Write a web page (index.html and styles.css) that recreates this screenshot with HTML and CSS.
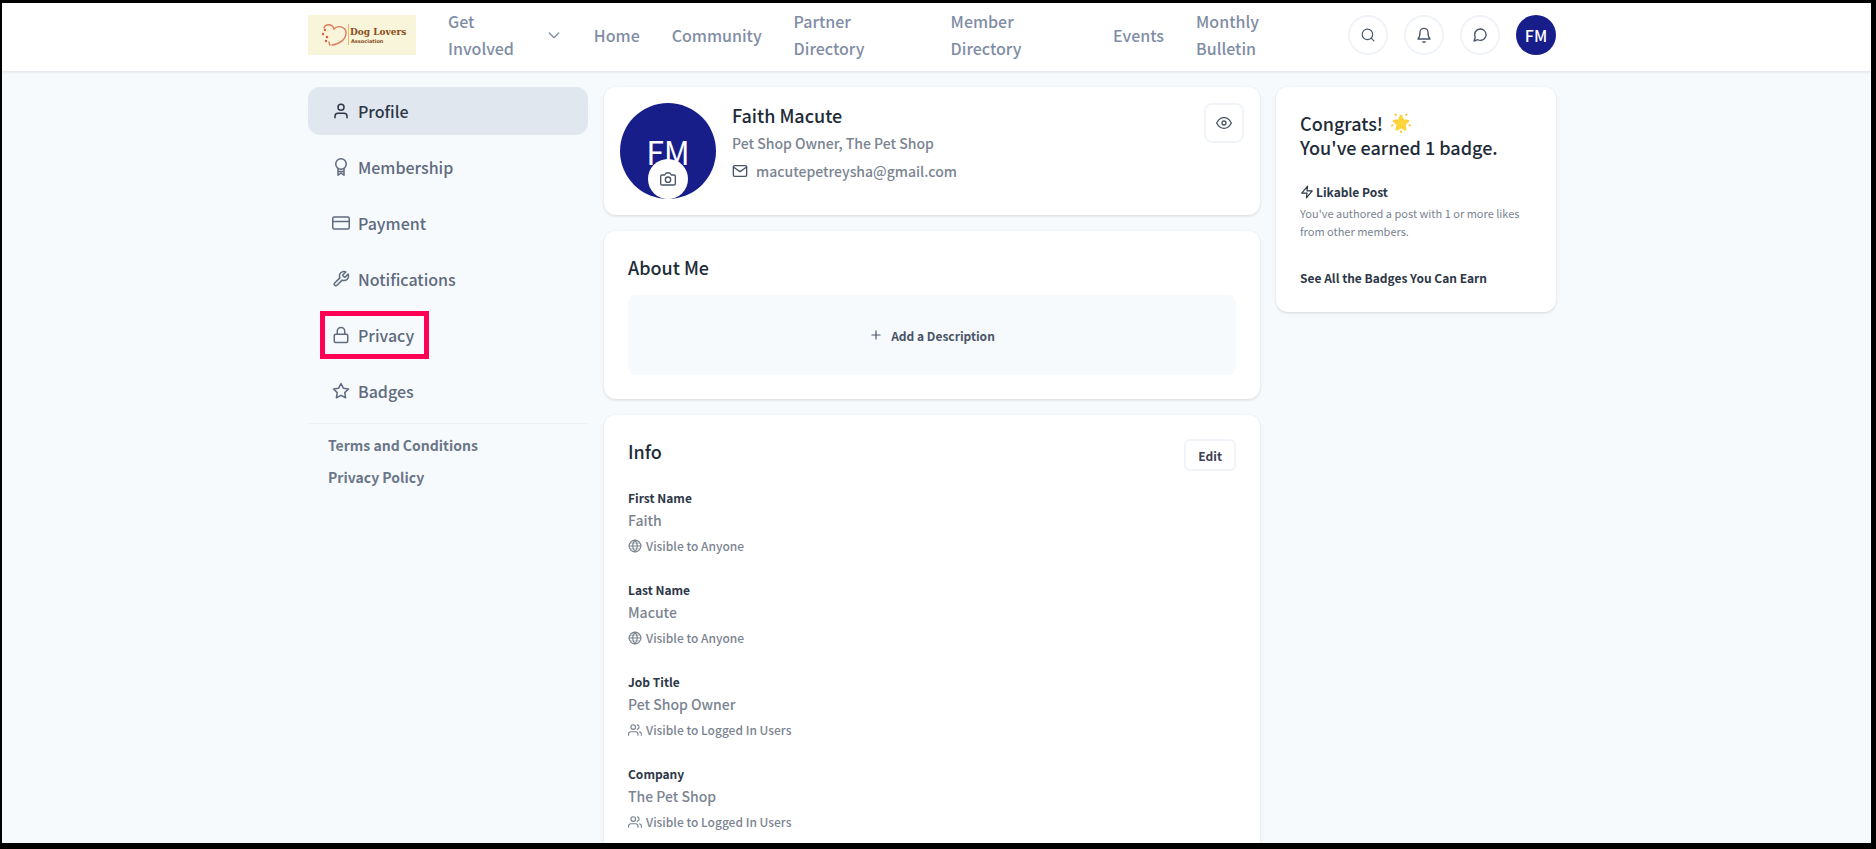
FILE: index.html
```html
<!DOCTYPE html>
<html lang="en">
    <head>
        <meta charset="UTF-8" />
        <meta name="viewport" content="width=device-width, initial-scale=1.0" />
        <title>Profile</title>
        <link rel="stylesheet" href="styles.css">
    </head>
    <body>
        <!-- shared icon shapes -->
        <svg class="sprite" aria-hidden="true">
            <symbol id="chevron" viewBox="0 0 24 24"><path d="M5 9l7 7 7-7" /></symbol>
            <symbol id="search" viewBox="0 0 24 24"><circle cx="11" cy="11" r="9" /><path d="M22 22l-4.5-4.5" /></symbol>
            <symbol id="bell" viewBox="0 0 24 24"><path d="M18 8A6 6 0 0 0 6 8c0 7-3 10-3 10h18s-3-3-3-10M13.7 22a2 2 0 0 1-3.4 0" /></symbol>
            <symbol id="chat" viewBox="0 0 24 24"><path d="M21 11.5a8.4 8.4 0 0 1-.9 3.8 8.5 8.5 0 0 1-7.6 4.7 8.4 8.4 0 0 1-3.8-.9L3 21l1.9-5.7a8.4 8.4 0 0 1-.9-3.8 8.5 8.5 0 0 1 4.7-7.6 8.4 8.4 0 0 1 3.8-.9h.5a8.5 8.5 0 0 1 8 8z" /></symbol>
            <symbol id="user" viewBox="0 0 24 24"><path d="M20 21v-2a4 4 0 0 0-4-4H8a4 4 0 0 0-4 4v2" /><circle cx="12" cy="7" r="4" /></symbol>
            <symbol id="award" viewBox="0 0 24 24"><circle cx="12" cy="8" r="7" /><path d="M8 14v9l4-3 4 3v-9M8 18h8" /></symbol>
            <symbol id="card" viewBox="0 0 24 24"><rect x="1" y="4" width="22" height="16" rx="2" /><path d="M1 10h22" /></symbol>
            <symbol id="tool" viewBox="0 0 24 24"><path d="M14.7 6.3a1 1 0 0 0 0 1.4l1.6 1.6a1 1 0 0 0 1.4 0l3.77-3.77a6 6 0 0 1-7.94 7.94l-6.91 6.91a2.12 2.12 0 0 1-3-3l6.91-6.91a6 6 0 0 1 7.94-7.94l-3.76 3.76z" /></symbol>
            <symbol id="lock" viewBox="0 0 24 24"><rect x="3" y="11" width="18" height="11" rx="2" /><path d="M7 11V7a5 5 0 0 1 10 0v4" /></symbol>
            <symbol id="star" viewBox="0 0 24 24"><path d="M12 2l3.09 6.26L22 9.27l-5 4.87 1.18 6.88L12 17.77l-6.18 3.25L7 14.14 2 9.27l6.91-1.01L12 2z" /></symbol>
            <symbol id="camera" viewBox="0 0 24 24"><path d="M23 19a2 2 0 0 1-2 2H3a2 2 0 0 1-2-2V8a2 2 0 0 1 2-2h4l2-3h6l2 3h4a2 2 0 0 1 2 2z" /><circle cx="12" cy="13" r="4" /></symbol>
            <symbol id="mail" viewBox="0 0 24 24"><rect x="2" y="4" width="20" height="16" rx="2" /><path d="M22 6l-10 7L2 6" /></symbol>
            <symbol id="eye" viewBox="0 0 24 24"><path d="M1 12s4-8 11-8 11 8 11 8-4 8-11 8-11-8-11-8z" /><circle cx="12" cy="12" r="3" /></symbol>
            <symbol id="plus" viewBox="0 0 24 24"><path d="M12 5v14M5 12h14" /></symbol>
            <symbol id="zap" viewBox="0 0 24 24"><path d="M13 2L3 14h9l-1 8 10-12h-9l1-8z" /></symbol>
            <symbol id="globe" viewBox="0 0 24 24"><circle cx="12" cy="12" r="10" /><path d="M2 12h20M12 2a15.3 15.3 0 0 1 4 10 15.3 15.3 0 0 1-4 10 15.3 15.3 0 0 1-4-10 15.3 15.3 0 0 1 4-10z" /><path d="M4 7h16M4 17h16" stroke-width="1" /></symbol>
            <symbol id="users" viewBox="0 0 24 24"><path d="M17 21v-2a4 4 0 0 0-4-4H5a4 4 0 0 0-4 4v2M23 21v-2a4 4 0 0 0-3-3.87M16 3.13a4 4 0 0 1 0 7.75" /><circle cx="9" cy="7" r="4" /></symbol>
        </svg>

        <header class="header">
            <div class="header-inner">
                <a href="#" class="logo" aria-label="Dog Lovers Association">
                    <svg viewBox="0 0 108 40" width="108" height="40">
                        <g fill="none" stroke="#e07a5f" stroke-width="1.4" stroke-linecap="round">
                            <path d="M16 13c1-4 8-5 10 1 3-4 12-3 12 4 0 6-6 11-14 12" />
                            <path d="M22 30c-1-1-1-2-1-3" />
                        </g>
                        <g fill="#d9603f">
                            <circle cx="17" cy="15" r="1.2" />
                            <circle cx="15" cy="19" r="1.2" />
                            <circle cx="19" cy="22" r="1.3" />
                            <circle cx="18" cy="26" r="1.2" />
                        </g>
                        <path d="M40.500 9v21" stroke="#f2b56b" />
                        <text x="42" y="20" class="logo-name">Dog Lovers</text>
                        <text x="43" y="28" class="logo-sub">Association</text>
                    </svg>
                </a>
                <nav class="nav">
                    <a href="#" class="nav-drop">
                        <span>Get Involved</span>
                        <svg class="icon icon-md"><use href="#chevron" /></svg>
                    </a>
                    <a href="#">Home</a>
                    <a href="#">Community</a>
                    <a href="#">Partner Directory</a>
                    <a href="#">Member Directory</a>
                    <a href="#">Events</a>
                    <a href="#">Monthly Bulletin</a>
                </nav>
                <div class="actions">
                    <button class="round-btn" aria-label="Search"><svg class="icon icon-sm"><use href="#search" /></svg></button>
                    <button class="round-btn" aria-label="Alerts"><svg class="icon icon-md"><use href="#bell" /></svg></button>
                    <button class="round-btn" aria-label="Messages"><svg class="icon icon-md"><use href="#chat" /></svg></button>
                    <button class="round-btn account">FM</button>
                </div>
            </div>
        </header>

        <main class="layout">
            <aside class="sidebar">
                <nav class="menu">
                    <a href="#" class="active"><svg class="icon icon-lg"><use href="#user" /></svg>Profile</a>
                    <a href="#"><svg class="icon icon-lg"><use href="#award" /></svg>Membership</a>
                    <a href="#"><svg class="icon icon-lg"><use href="#card" /></svg>Payment</a>
                    <a href="#"><svg class="icon icon-lg"><use href="#tool" /></svg>Notifications</a>
                    <a href="#" class="marked"><svg class="icon icon-lg"><use href="#lock" /></svg>Privacy</a>
                    <a href="#"><svg class="icon icon-lg"><use href="#star" /></svg>Badges</a>
                </nav>
                <div class="legal">
                    <a href="#">Terms and Conditions</a>
                    <a href="#">Privacy Policy</a>
                </div>
            </aside>

            <div class="column">
                <section class="card person">
                    <div class="avatar">
                        FM
                        <button class="photo-btn" aria-label="Change photo"><svg class="icon icon-md"><use href="#camera" /></svg></button>
                    </div>
                    <div class="person-text">
                        <h1>Faith Macute</h1>
                        <p>Pet Shop Owner, The Pet Shop</p>
                        <p class="email"><svg class="icon icon-md"><use href="#mail" /></svg>macutepetreysha@gmail.com</p>
                    </div>
                    <button class="square-btn" aria-label="View profile"><svg class="icon icon-md"><use href="#eye" /></svg></button>
                </section>

                <section class="card">
                    <h2>About Me</h2>
                    <button class="add-btn"><svg class="icon icon-sm"><use href="#plus" /></svg>Add a Description</button>
                </section>

                <section class="card">
                    <div class="card-head">
                        <h2>Info</h2>
                        <button class="edit-btn">Edit</button>
                    </div>
                    <dl class="info">
                        <div>
                            <dt>First Name</dt>
                            <dd>Faith</dd>
                            <dd class="visible"><svg class="icon icon-sm"><use href="#globe" /></svg>Visible to Anyone</dd>
                        </div>
                        <div>
                            <dt>Last Name</dt>
                            <dd>Macute</dd>
                            <dd class="visible"><svg class="icon icon-sm"><use href="#globe" /></svg>Visible to Anyone</dd>
                        </div>
                        <div>
                            <dt>Job Title</dt>
                            <dd>Pet Shop Owner</dd>
                            <dd class="visible"><svg class="icon icon-sm"><use href="#users" /></svg>Visible to Logged In Users</dd>
                        </div>
                        <div>
                            <dt>Company</dt>
                            <dd>The Pet Shop</dd>
                            <dd class="visible"><svg class="icon icon-sm"><use href="#users" /></svg>Visible to Logged In Users</dd>
                        </div>
                    </dl>
                </section>
            </div>

            <aside class="card badges">
                <h2>
                    Congrats!
                    <svg class="glow-star" viewBox="0 0 20 20" aria-hidden="true">
                        <path d="M10 3l2 4.500 5 .6-3.700 3.300 1 5-4.300-2.500-4.300 2.500 1-5L3 8.100l5-.6z" fill="#ffd43b" stroke="#ffd43b" stroke-width="2.500" stroke-linejoin="round" />
                        <path d="M4.500 1.500l.4.600M15.500 1.500l-.4.600M1 12.500l.6-.2M19 12.500l-.6-.2M10 18.500v.5" stroke="#fcc21b" stroke-width="1.800" stroke-linecap="round" />
                    </svg>
                    <br>You've earned 1 badge.
                </h2>
                <h3><svg class="icon icon-sm"><use href="#zap" /></svg>Likable Post</h3>
                <p>You've authored a post with 1 or more likes from other members.</p>
                <a href="#">See All the Badges You Can Earn</a>
            </aside>
        </main>
    </body>
</html>
```

FILE: styles.css
```css
* {
    box-sizing: border-box;
}

body {
    margin: 0;
    height: 100vh;
    overflow: hidden;
    border: solid #000;
    border-width: 3px 5px 6px 2px;
    background: #f6fafd;
    color: #2d3748;
    font-family: "Noto Sans CJK SC", "Noto Sans", sans-serif;
    font-size: 14px;
    line-height: 24px;
}

h1, h2, h3, p, dl, dd {
    margin: 0;
}

a {
    color: inherit;
    text-decoration: none;
}

button {
    padding: 0;
    background: white;
    border: 2px solid #f0f4f9;
    color: #4a5568;
    font-family: inherit;
    cursor: pointer;
}

.sprite {
    display: none;
}

.icon {
    flex: none;
    fill: none;
    stroke: currentColor;
    stroke-width: 2;
    stroke-linecap: round;
    stroke-linejoin: round;
}

.icon-sm {
    width: 14px;
    height: 14px;
}

.icon-md {
    width: 16px;
    height: 16px;
}

.icon-lg {
    width: 18px;
    height: 18px;
}

.header {
    padding: 5px 9px 9px 0;
    background: white;
    border-bottom: 1px solid #e6eaee;
    box-shadow: 0 1px 2px rgba(0, 0, 0, 0.06);
}

.header-inner {
    display: flex;
    align-items: center;
    gap: 32px;
    max-width: 1248px;
    min-height: 54px;
    margin: 0 auto;
}

.logo {
    flex: none;
    height: 40px;
    background: #f9f5da;
}

.logo-name {
    fill: #8a4b1c;
    font-family: "DejaVu Serif", serif;
    font-size: 9px;
    font-weight: bold;
}

.logo-sub {
    fill: #8a4b1c;
    font-family: "DejaVu Sans", sans-serif;
    font-size: 5px;
    font-weight: bold;
}

.nav {
    flex: 1;
    display: flex;
    align-items: center;
    gap: 32px;
    color: #7f8da5;
    font-size: 16px;
    font-weight: 500;
    line-height: 27px;
}

.nav-drop {
    display: flex;
    align-items: center;
    gap: 8px;
}

.actions {
    display: flex;
    gap: 16px;
}

.round-btn {
    display: flex;
    align-items: center;
    justify-content: center;
    width: 40px;
    height: 40px;
    border-radius: 50%;
}

.account {
    background: #171e8a;
    border: none;
    color: white;
    font-size: 16px;
    font-weight: 500;
}

.layout {
    display: grid;
    grid-template-columns: 280px 1fr 280px;
    align-items: start;
    gap: 16px;
    max-width: 1257px;
    margin: 15px auto;
    padding-right: 9px;
}

.menu {
    display: flex;
    flex-direction: column;
    gap: 8px;
    padding-bottom: 8px;
    border-bottom: 1px solid #edf2f7;
}

.menu a {
    display: flex;
    align-items: center;
    gap: 8px;
    height: 48px;
    padding: 0 24px;
    border-radius: 12px;
    color: #5f6b7e;
    font-size: 16px;
    font-weight: 500;
}

.menu .active {
    background: #e1e7ef;
    color: #2d3748;
}

.menu .marked {
    position: relative;
}

.marked::after {
    content: "";
    position: absolute;
    top: 0;
    bottom: 0;
    left: 12px;
    width: 99px;
    border: 5px solid #ff0055;
}

.legal {
    display: flex;
    flex-direction: column;
    gap: 8px;
    padding: 9px 20px;
    color: #6b7688;
    font-weight: 600;
}

.column {
    display: flex;
    flex-direction: column;
    gap: 16px;
}

.card {
    padding: 24px;
    background: white;
    border-radius: 12px;
    box-shadow: 0 1px 3px rgba(0, 0, 0, 0.14);
}

h1, h2 {
    color: #222b38;
    font-size: 18px;
    font-weight: 500;
    line-height: 24px;
}

.person {
    display: flex;
    align-items: flex-start;
    gap: 16px;
    padding: 16px;
}

.person-text {
    flex: 1;
    display: flex;
    flex-direction: column;
    gap: 4px;
    color: #7b8491;
    font-weight: 500;
}

.email {
    display: flex;
    align-items: center;
    gap: 8px;
}

.email .icon {
    color: #4a5568;
}

.avatar {
    position: relative;
    width: 96px;
    height: 96px;
    border-radius: 50%;
    background: #171e8a;
    color: white;
    font-size: 32px;
    line-height: 96px;
    text-align: center;
}

.photo-btn {
    position: absolute;
    left: 28px;
    bottom: 0;
    display: flex;
    align-items: center;
    justify-content: center;
    width: 40px;
    height: 40px;
    border: none;
    border-radius: 50%;
}

.square-btn {
    display: flex;
    align-items: center;
    justify-content: center;
    width: 40px;
    height: 40px;
    border-radius: 8px;
}

.add-btn {
    display: flex;
    align-items: center;
    justify-content: center;
    gap: 8px;
    width: 100%;
    height: 80px;
    margin-top: 16px;
    border: none;
    border-radius: 8px;
    background: #f6fafd;
    font-size: 12px;
    font-weight: 600;
}

.card-head {
    display: flex;
    justify-content: space-between;
    align-items: flex-start;
}

.edit-btn {
    height: 32px;
    padding: 0 12px;
    border-radius: 6px;
    color: #3a4252;
    font-size: 12px;
    font-weight: 600;
}

.info {
    display: flex;
    flex-direction: column;
    gap: 24px;
    margin-top: 17px;
}

.info dt {
    font-size: 12px;
    font-weight: 600;
    line-height: 20px;
}

.info dd {
    color: #7b8491;
    font-weight: 500;
}

.info .visible {
    display: flex;
    align-items: center;
    gap: 4px;
    margin-top: 4px;
    font-size: 12px;
    line-height: 20px;
}

.glow-star {
    width: 20px;
    height: 20px;
    margin-left: 4px;
    vertical-align: -2px;
}

.badges h3 {
    display: flex;
    align-items: center;
    gap: 2px;
    margin-top: 25px;
    font-size: 12px;
    font-weight: 600;
    line-height: 16px;
}

.badges p {
    margin: 4px 0 28px;
    color: #7b8491;
    font-size: 11px;
    line-height: 18px;
}

.badges a {
    display: block;
    font-size: 12px;
    font-weight: 600;
    line-height: 20px;
}
```
